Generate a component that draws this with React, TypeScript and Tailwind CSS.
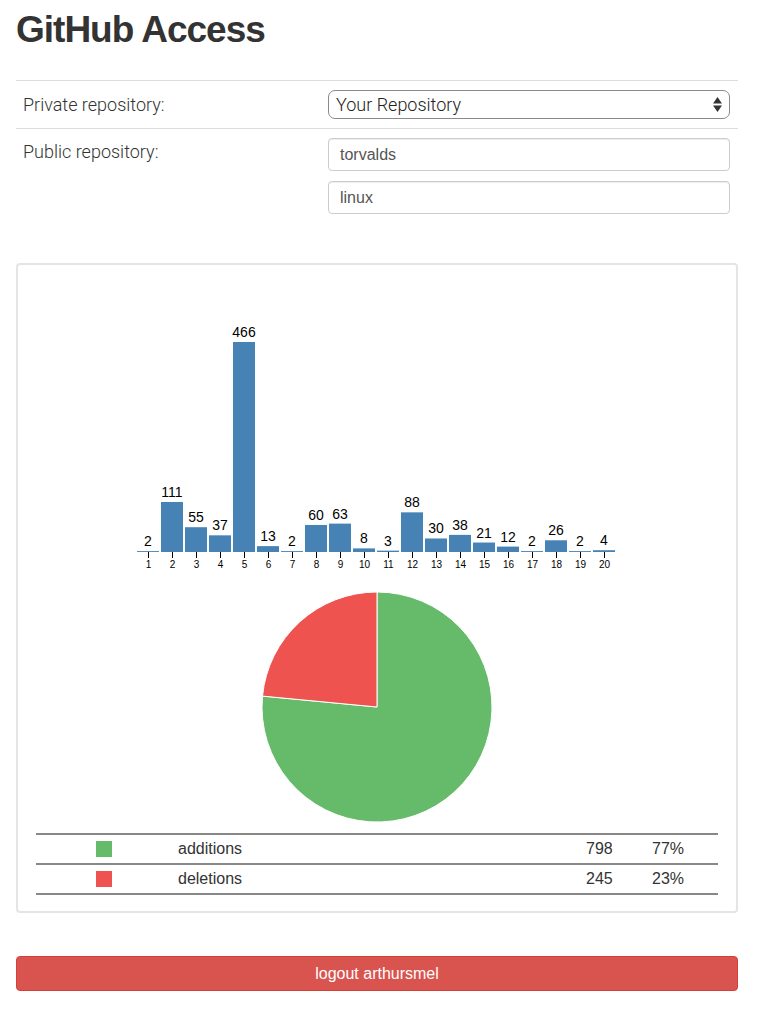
import React from "react";

const values = [2, 111, 55, 37, 466, 13, 2, 60, 63, 8, 3, 88, 30, 38, 21, 12, 2, 26, 2, 4];
const BASE = 552;
const SCALE = 210 / 466;

function BarChart() {
  return (
    <svg width={718} height={315} viewBox="18 265 718 315" className="block">
      {values.map((v, i) => {
        const x = 137 + 24 * i;
        const h = v * SCALE;
        const cx = x + 11;
        return (
          <g key={i}>
            <rect x={x} y={BASE - h} width={22} height={h} fill="#4682b4" />
            <text
              x={cx}
              y={BASE - h - 5}
              textAnchor="middle"
              fontSize={14}
              fontFamily="'Liberation Sans', Arial, sans-serif"
              fill="#000"
            >
              {v}
            </text>
            <line x1={cx + 0.5} x2={cx + 0.5} y1={BASE} y2={BASE + 6} stroke="#000" strokeWidth={1} />
            <text
              x={cx + 0.5}
              y={BASE + 16}
              textAnchor="middle"
              fontSize={10}
              fontFamily="'Liberation Sans', Arial, sans-serif"
              fill="#000"
            >
              {i + 1}
            </text>
          </g>
        );
      })}
    </svg>
  );
}

function PieChart() {
  const cx = 377;
  const cy = 707;
  const r = 115;
  const a = (2 * Math.PI * 798) / 1043;
  const px = cx + r * Math.sin(a);
  const py = cy - r * Math.cos(a);
  return (
    <svg width={718} height={248} viewBox="18 580 718 248" className="block">
      <path
        d={`M ${cx} ${cy - r} A ${r} ${r} 0 1 1 ${px} ${py} L ${cx} ${cy} Z`}
        fill="#66bb6a"
        stroke="#fff"
        strokeWidth={1}
      />
      <path
        d={`M ${px} ${py} A ${r} ${r} 0 0 1 ${cx} ${cy - r} L ${cx} ${cy} Z`}
        fill="#ef5350"
        stroke="#fff"
        strokeWidth={1}
      />
    </svg>
  );
}

function SelectArrows() {
  return (
    <svg width={9} height={15} viewBox="0 0 9 15">
      <polygon points="0,6.5 4.5,0 9,6.5" fill="#333" />
      <polygon points="0,8.5 9,8.5 4.5,15" fill="#333" />
    </svg>
  );
}

export default function App() {
  return (
    <div className="min-h-[1012px] bg-white pb-5 pl-4 pr-[30px] font-['Liberation_Sans',Arial,sans-serif] text-[#333]">
      <h1 className="pt-[10px] text-[37px] font-bold leading-[40px] tracking-[-1px] text-[#333]">
        GitHub Access
      </h1>

      <div className="mt-[30px]">
        <div className="flex h-[48px] border-t border-[#ddd]">
          <div className="flex w-[304px] items-center pl-[7px] font-['Roboto',sans-serif] text-[18px] font-light text-[#333]">
            Private repository:
          </div>
          <div className="flex flex-1 items-center px-2">
            <div className="flex h-[29px] w-full items-center justify-between rounded-[7px] border border-[#8a8a8a] bg-white pl-[7px] pr-[7px]">
              <span className="font-['Roboto',sans-serif] text-[18px] font-light text-[#222]">Your Repository</span>
              <SelectArrows />
            </div>
          </div>
        </div>
        <div className="flex border-t border-[#ddd]">
          <div className="w-[304px] pl-[7px] pt-[10px] font-['Roboto',sans-serif] text-[18px] font-light leading-[26px] text-[#333]">
            Public repository:
          </div>
          <div className="flex flex-1 flex-col gap-[10px] px-2 pb-2 pt-[9px]">
            <div className="flex h-[33px] items-center rounded-[4px] border border-[#ccc] pl-[11px] text-[16px] text-[#555] shadow-[inset_0_1px_1px_rgba(0,0,0,0.075)]">
              torvalds
            </div>
            <div className="flex h-[33px] items-center rounded-[4px] border border-[#ccc] pl-[11px] text-[16px] text-[#555] shadow-[inset_0_1px_1px_rgba(0,0,0,0.075)]">
              linux
            </div>
          </div>
        </div>
      </div>

      <div className="mt-[41px] rounded-[4px] border-2 border-[#e5e5e5] bg-white pb-[16px]">
        <BarChart />
        <PieChart />
        <div className="mx-[18px] mt-[5px] border-b-2 border-[#888] text-[16px] text-[#333]">
          <div className="grid h-[30px] grid-cols-[142px_408px_66px_1fr] items-center border-t-2 border-[#888]">
            <div className="pl-[60px]">
              <div className="h-4 w-4 bg-[#66bb6a]" />
            </div>
            <div>additions</div>
            <div>798</div>
            <div>77%</div>
          </div>
          <div className="grid h-[30px] grid-cols-[142px_408px_66px_1fr] items-center border-t-2 border-[#888]">
            <div className="pl-[60px]">
              <div className="h-4 w-4 bg-[#ef5350]" />
            </div>
            <div>deletions</div>
            <div>245</div>
            <div>23%</div>
          </div>
        </div>
      </div>

      <button className="mt-[43px] flex h-[35px] w-full items-center justify-center rounded-[4px] border border-[#d43f3a] bg-[#d9534f] text-[16px] text-white">
        logout arthursmel
      </button>
    </div>
  );
}
